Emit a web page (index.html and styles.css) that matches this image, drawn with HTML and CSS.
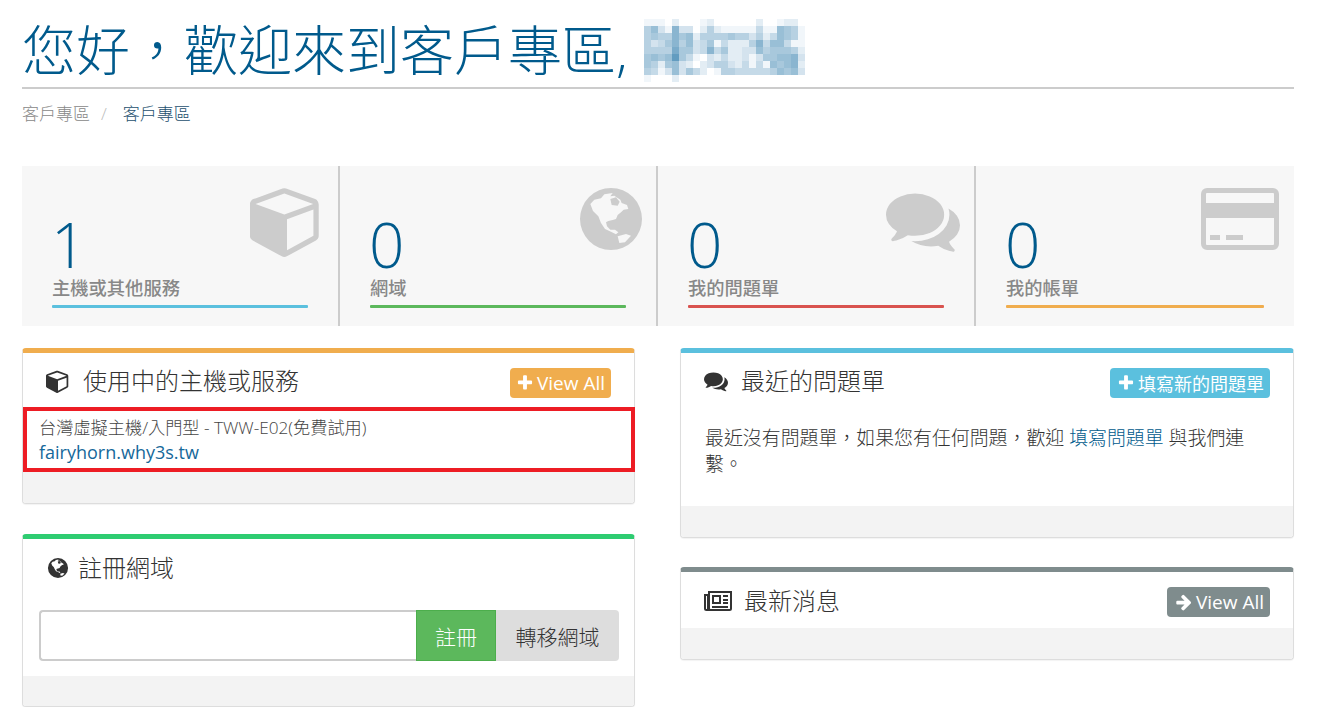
FILE: index.html
```html
<!DOCTYPE html>
<html lang="zh-Hant">
<head>
<meta charset="utf-8">
<title>客戶專區</title>
<link rel="stylesheet" href="styles.css">
</head>
<body>
<svg class="defs" width="0" height="0" aria-hidden="true">
  <symbol id="i-cube" viewBox="0 0 1792 1792"><path d="M896 1629l640-349v-636l-640 233v752zm-64-865l698-254-698-254-698 254zm832-252v768q0 35-18 65t-50 47l-704 384q-28 16-61 16t-61-16l-704-384q-32-18-50-47t-18-65v-768q0-40 23-73t61-49l704-256q22-8 44-8t44 8l704 256q38 16 61 49t23 73z"/></symbol>
  <symbol id="i-globe" viewBox="0 0 240 240"><path fill-rule="evenodd" d="M120 27a93 93 0 1 0 0 186a93 93 0 1 0 0-186zM58 75L70 62L90 58L100 46L125 42L118 52L130 50L148 62L152 72L168 78L172 90L158 92L150 100L140 108L135 120L128 122L112 126L105 130L108 142L118 152L132 152L142 160L135 166L120 158L102 150L90 132L82 112L66 96zM140 172L165 165L180 170L162 190L145 192zM118 60L135 55L146 68L140 80L122 78z"/></symbol>
  <symbol id="i-comments" viewBox="0 0 1792 1792"><path d="M1408 768q0 139-94 257t-256.500 186.500-353.500 68.500q-86 0-176-16-124 88-278 128-36 9-86 16h-3q-11 0-20.500-8t-11.500-21q-1-3-1-6.500t.5-6.500 2-6l2.500-5 3.500-5.500 4-5 4.500-5 4-4.500q5-6 23-25t26-29.500 22.500-29 25-38.500 20.500-44q-124-72-195-177t-71-224q0-139 94-257t256.500-186.500 353.500-68.500 353.500 68.500 256.500 186.500 94 257zm384 256q0 120-71 224.500t-195 176.500q10 24 20.500 44t25 38.500 22.500 29 26 29.500 23 25q1 1 4 4.500t4.500 5 4 5 3.500 5.500l2.500 5 2 6 .5 6.500-1 6.500q-3 14-13 22t-22 7q-50-7-86-16-154-40-278-128-90 16-176 16-271 0-472-132 58 4 88 4 161 0 309-45t264-129q125-92 192-212t67-254q0-77-23-152 129 71 204 178t75 230z"/></symbol>
  <symbol id="i-card" viewBox="0 0 78 62"><path fill-rule="evenodd" d="M6 0H72a6 6 0 0 1 6 6V56a6 6 0 0 1-6 6H6a6 6 0 0 1-6-6V6a6 6 0 0 1 6-6zM5 6V15H73V6a1 1 0 0 0-1-1H6a1 1 0 0 0-1 1zM5 30V56a1 1 0 0 0 1 1H72a1 1 0 0 0 1-1V30zM9 47H19V52H9zM25 47H42V52H25z"/></symbol>
  <symbol id="i-news" viewBox="0 0 28 20"><path fill-rule="evenodd" d="M4 0H28V17.500A2.500 2.500 0 0 1 25.500 20H2.500A2.500 2.500 0 0 1 0 17.500V3H4zM2 5V17.500A.5.5 0 0 0 3 17.500V5zM6 2V17a1 1 0 0 1 0 1H25.500A.5.5 0 0 0 26 17.500V2zM8 4H17V13H8zM10 6V11H15V6zM19 4H24V6H19zM19 8H24V10H19zM19 11H24V13H19zM8 15H24V17H8z"/></symbol>
  <symbol id="i-plus" viewBox="0 0 1792 1792"><path d="M1600 736v192q0 40-28 68t-68 28h-416v416q0 40-28 68t-68 28h-192q-40 0-68-28t-28-68v-416h-416q-40 0-68-28t-28-68v-192q0-40 28-68t68-28h416v-416q0-40 28-68t68-28h192q40 0 68 28t28 68v416h416q40 0 68 28t28 68z"/></symbol>
  <symbol id="i-arrow" viewBox="0 0 1792 1792"><path d="M1600 960q0 54-37 91l-651 651q-39 37-91 37-51 0-90-37l-75-75q-38-38-38-91t38-91l293-293h-704q-52 0-84.500-37.500t-32.500-90.500v-128q0-53 32.500-90.500t84.500-37.500h704l-293-294q-38-36-38-90t38-90l75-75q38-38 90-38 53 0 91 38l651 651q37 35 37 90z"/></symbol>
</svg>

<header class="page-head">
  <h1 class="title">
    <span>您好，歡迎來到客戶專區,</span>
    <svg class="mosaic" width="161" height="63" viewBox="0 0 161 63" role="img" aria-label="已模糊的姓名">
      <g><rect class="l1" x="0"/><rect class="l1" x="7"/><rect class="l1" x="14"/><rect class="l2" x="28"/><rect class="l1" x="56"/><rect class="l2" x="63"/><rect class="l2" x="112"/><rect class="l1" x="133"/><rect class="l2" x="140"/><rect class="l2" x="147"/></g>
      <g transform="translate(0,7)"><rect class="l5" x="0"/><rect class="l7" x="7"/><rect class="l3" x="14"/><rect class="l1" x="21"/><rect class="l8" x="28"/><rect class="l3" x="35"/><rect class="l3" x="42"/><rect class="l2" x="56"/><rect class="l5" x="63"/><rect class="l2" x="70"/><rect class="l1" x="77"/><rect class="l1" x="84"/><rect class="l1" x="91"/><rect class="l1" x="98"/><rect class="l1" x="105"/><rect class="l4" x="112"/><rect class="l1" x="119"/><rect class="l1" x="126"/><rect class="l7" x="133"/><rect class="l6" x="140"/><rect class="l5" x="147"/><rect class="l1" x="154"/></g>
      <g transform="translate(0,14)"><rect class="l5" x="0"/><rect class="l6" x="7"/><rect class="l5" x="14"/><rect class="l5" x="21"/><rect class="l8" x="28"/><rect class="l6" x="35"/><rect class="l7" x="42"/><rect class="l2" x="49"/><rect class="l5" x="56"/><rect class="l5" x="63"/><rect class="l5" x="70"/><rect class="l5" x="77"/><rect class="l6" x="84"/><rect class="l5" x="91"/><rect class="l5" x="98"/><rect class="l3" x="105"/><rect class="l5" x="112"/><rect class="l2" x="119"/><rect class="l4" x="126"/><rect class="l7" x="133"/><rect class="l6" x="140"/><rect class="l5" x="147"/><rect class="l1" x="154"/></g>
      <g transform="translate(0,21)"><rect class="l5" x="0"/><rect class="l3" x="7"/><rect class="l4" x="14"/><rect class="l6" x="21"/><rect class="l8" x="28"/><rect class="l5" x="35"/><rect class="l7" x="42"/><rect class="l3" x="49"/><rect class="l4" x="56"/><rect class="l6" x="63"/><rect class="l1" x="70"/><rect class="l4" x="77"/><rect class="l2" x="84"/><rect class="l2" x="91"/><rect class="l2" x="98"/><rect class="l5" x="105"/><rect class="l8" x="112"/><rect class="l4" x="119"/><rect class="l7" x="126"/><rect class="l7" x="133"/><rect class="l4" x="140"/><rect class="l1" x="147"/><rect class="l1" x="154"/></g>
      <g transform="translate(0,28)"><rect class="l5" x="0"/><rect class="l5" x="7"/><rect class="l5" x="14"/><rect class="l5" x="21"/><rect class="l9" x="28"/><rect class="l6" x="35"/><rect class="l6" x="42"/><rect class="l3" x="49"/><rect class="l4" x="56"/><rect class="l8" x="63"/><rect class="l4" x="70"/><rect class="l6" x="77"/><rect class="l2" x="84"/><rect class="l2" x="91"/><rect class="l3" x="98"/><rect class="l3" x="105"/><rect class="l7" x="112"/><rect class="l5" x="119"/><rect class="l6" x="126"/><rect class="l6" x="133"/><rect class="l6" x="140"/><rect class="l5" x="147"/><rect class="l2" x="154"/></g>
      <g transform="translate(0,35)"><rect class="l6" x="0"/><rect class="l7" x="7"/><rect class="l6" x="14"/><rect class="l7" x="21"/><rect class="l10" x="28"/><rect class="l6" x="35"/><rect class="l4" x="42"/><rect class="l1" x="49"/><rect class="l3" x="63"/><rect class="l2" x="70"/><rect class="l4" x="77"/><rect class="l2" x="84"/><rect class="l2" x="91"/><rect class="l3" x="98"/><rect class="l1" x="105"/><rect class="l3" x="112"/><rect class="l6" x="119"/><rect class="l6" x="126"/><rect class="l7" x="133"/><rect class="l7" x="140"/><rect class="l8" x="147"/><rect class="l3" x="154"/></g>
      <g transform="translate(0,42)"><rect class="l6" x="0"/><rect class="l5" x="7"/><rect class="l2" x="14"/><rect class="l6" x="21"/><rect class="l7" x="28"/><rect class="l3" x="35"/><rect class="l2" x="42"/><rect class="l2" x="56"/><rect class="l3" x="63"/><rect class="l5" x="70"/><rect class="l5" x="77"/><rect class="l3" x="84"/><rect class="l2" x="91"/><rect class="l4" x="98"/><rect class="l1" x="105"/><rect class="l4" x="112"/><rect class="l1" x="119"/><rect class="l7" x="126"/><rect class="l6" x="133"/><rect class="l7" x="140"/><rect class="l8" x="147"/><rect class="l2" x="154"/></g>
      <g transform="translate(0,49)"><rect class="l5" x="0"/><rect class="l4" x="7"/><rect class="l1" x="14"/><rect class="l3" x="21"/><rect class="l7" x="28"/><rect class="l3" x="35"/><rect class="l6" x="42"/><rect class="l4" x="49"/><rect class="l2" x="56"/><rect class="l1" x="70"/><rect class="l5" x="77"/><rect class="l5" x="84"/><rect class="l4" x="91"/><rect class="l4" x="98"/><rect class="l4" x="105"/><rect class="l4" x="112"/><rect class="l4" x="119"/><rect class="l5" x="126"/><rect class="l7" x="133"/><rect class="l6" x="140"/><rect class="l7" x="147"/><rect class="l3" x="154"/></g>
      <g transform="translate(0,56)"><rect class="l1" x="0"/><rect class="l2" x="28"/></g>
    </svg>
  </h1>
</header>
<nav class="crumbs"><a class="crumb-link">客戶專區</a><span class="crumb-sep">/</span><span class="crumb-here">客戶專區</span></nav>

<section class="tiles">
  <div class="tile tile-blue">
    <svg class="tile-icon"><use href="#i-cube"/></svg>
    <div class="tile-num">1</div>
    <div class="tile-label">主機或其他服務</div>
  </div>
  <div class="tile tile-green">
    <svg class="tile-icon icon-globe"><use href="#i-globe"/></svg>
    <div class="tile-num">0</div>
    <div class="tile-label">網域</div>
  </div>
  <div class="tile tile-red">
    <svg class="tile-icon"><use href="#i-comments"/></svg>
    <div class="tile-num">0</div>
    <div class="tile-label">我的問題單</div>
  </div>
  <div class="tile tile-gold">
    <svg class="tile-icon icon-card"><use href="#i-card"/></svg>
    <div class="tile-num">0</div>
    <div class="tile-label">我的帳單</div>
  </div>
</section>

<main class="panels">
  <div class="col">
    <article class="panel top-gold">
      <div class="panel-head head-short">
        <h3 class="panel-title"><svg class="ico ico-cube"><use href="#i-cube"/></svg>使用中的主機或服務</h3>
        <a class="btn btn-gold"><svg class="btn-ico"><use href="#i-plus"/></svg>View All</a>
      </div>
      <div class="service">
        <div class="service-name">台灣虛擬主機/入門型 - TWW-E02(免費試用)</div>
        <a class="service-domain">fairyhorn.why3s.tw</a>
      </div>
      <div class="panel-foot"></div>
    </article>
    <article class="panel top-green">
      <div class="panel-head">
        <h3 class="panel-title title-low"><svg class="ico ico-globe"><use href="#i-globe"/></svg>註冊網域</h3>
      </div>
      <div class="domain-body">
        <div class="domain-group">
          <input class="domain-input" type="text" aria-label="網域">
          <button class="dom-btn dom-reg">註冊</button>
          <button class="dom-btn dom-move">轉移網域</button>
        </div>
      </div>
      <div class="panel-foot foot-short"></div>
    </article>
  </div>
  <div class="col col-right">
    <article class="panel top-blue">
      <div class="panel-head">
        <h3 class="panel-title"><svg class="ico ico-chat"><use href="#i-comments"/></svg>最近的問題單</h3>
        <a class="btn btn-blue"><svg class="btn-ico"><use href="#i-plus"/></svg>填寫新的問題單</a>
      </div>
      <p class="panel-text">最近沒有問題單，如果您有任何問題，歡迎 <a class="text-link">填寫問題單</a> 與我們連繫。</p>
      <div class="panel-foot"></div>
    </article>
    <article class="panel top-gray">
      <div class="panel-head">
        <h3 class="panel-title title-low"><svg class="ico ico-news"><use href="#i-news"/></svg>最新消息</h3>
        <a class="btn btn-gray"><svg class="btn-ico"><use href="#i-arrow"/></svg>View All</a>
      </div>
      <div class="panel-foot"></div>
    </article>
  </div>
</main>
</body>
</html>
```

FILE: styles.css
```css
* { box-sizing: border-box; }
html, body { margin: 0; }
body {
  padding: 0 27px 0 22px;
  background: #fff;
  color: #333;
  font-family: "Open Sans", "Noto Sans CJK TC", sans-serif;
  font-size: 19px;
}
.defs { position: absolute; }

.page-head { height: 89px; border-bottom: 2px solid #ccc; }
.title {
  margin: 0;
  height: 87px;
  display: flex;
  align-items: flex-start;
  color: #005a8c;
  font-size: 54px;
  font-weight: 300;
  line-height: 100px;
  white-space: nowrap;
}
.title span { display: block; }
.mosaic { flex: none; margin: 19px 0 0 16px; }
.mosaic rect { width: 7px; height: 7px; }
.l1 { fill: #f1f6fa; } .l2 { fill: #e3edf4; } .l3 { fill: #d4e3ee; }
.l4 { fill: #c5dae8; } .l5 { fill: #b7d1e2; } .l6 { fill: #a8c8dc; }
.l7 { fill: #99bfd6; } .l8 { fill: #8ab5d0; } .l9 { fill: #7aabca; }
.l10 { fill: #629cc0; }

.crumbs {
  display: flex;
  height: 77px;
  padding-top: 14px;
  font-size: 17px;
  line-height: 22px;
  font-weight: 300;
}
.crumb-link { color: #888; }
.crumb-sep { color: #bbb; margin: 0 16px 0 11px; }
.crumb-here { color: #1d4f6e; }

.tiles {
  display: grid;
  grid-template-columns: repeat(4, 318px);
  height: 160px;
  background: #f7f7f7;
}
.tile {
  position: relative;
  padding: 42px 30px 0 30px;
  border-right: 2px solid #ccc;
}
.tile:last-child { border-right: 0; }
.tile-icon {
  position: absolute;
  top: 17px;
  right: 14px;
  width: 74px;
  height: 74px;
  fill: #ccc;
}
.icon-globe { top: 13px; right: 5px; width: 80px; height: 80px; }
.icon-card { top: 22px; right: 15px; width: 78px; height: 62px; }
.tile-num {
  margin-left: -1px;
  color: #005a8c;
  font-size: 62px;
  font-weight: 300;
  line-height: 72px;
}
.tile-label {
  height: 23px;
  margin-top: -4px;
  color: #888;
  font-size: 18.3px;
  font-weight: 500;
  line-height: 24px;
}
.tile-label::after {
  content: "";
  display: block;
  height: 3px;
  margin-top: 5px;
  border-radius: 1px;
  background: var(--bar);
}
.tile-blue { --bar: #5bc0de; }
.tile-green { --bar: #5cb85c; }
.tile-red { --bar: #d9534f; }
.tile-gold { --bar: #f0ad4e; }

.panels {
  display: grid;
  grid-template-columns: 613px 614px;
  column-gap: 45px;
  margin-top: 22px;
}
.col { display: flex; flex-direction: column; gap: 30px; }
.col-right { gap: 29px; }
.panel {
  border: 1px solid #ddd;
  border-top: 5px solid;
  border-radius: 4px;
  background: #fff;
  box-shadow: 0 1px 1px rgba(0, 0, 0, .05);
}
.top-gold { border-top-color: #f0ad4e; }
.top-green { border-top-color: #2ecc71; }
.top-blue { border-top-color: #5bc0de; }
.top-gray { border-top-color: #7f8c8d; }

.panel-head {
  display: flex;
  justify-content: space-between;
  align-items: flex-start;
  height: 56px;
  padding: 15px 23px 0 23px;
}
.head-short { height: 54px; }
.panel-title {
  margin: 0;
  display: flex;
  align-items: center;
  height: 26px;
  font-size: 24px;
  font-weight: 300;
  line-height: 26px;
}
.title-low { height: 28px; }
.ico { flex: none; fill: #333; }
.ico-cube { width: 24px; height: 24px; margin-right: 13px; }
.ico-globe { width: 26px; height: 26px; margin-right: 7px; margin-left: -1px; }
.ico-chat { width: 24px; height: 24px; margin-right: 13px; }
.ico-news { width: 28px; height: 20px; margin-right: 12px; }

.btn {
  display: flex;
  align-items: center;
  height: 30px;
  padding: 0 6px 0 7px;
  border-radius: 4px;
  color: #fff;
  font-size: 19px;
  font-weight: 400;
}
.btn-ico { width: 18px; height: 18px; margin-right: 3px; fill: #fff; }
.btn-gold { background: #f0ad4e; padding-left: 6px; }
.btn-blue { background: #5bc0de; font-size: 18px; }
.btn-gray { background: #7f8c8d; padding-left: 8px; }

.service {
  height: 65px;
  margin: 0 -1px 0 0;
  padding: 5px 12px 0 12px;
  border: 4px solid #ed1c24;
}
.service-name { color: #444; font-size: 17.2px; font-weight: 300; line-height: 24px; }
.service-domain { color: #15689a; font-size: 18px; line-height: 24px; display: block; }

.panel-foot { height: 31px; background: #f3f3f3; border-radius: 0 0 3px 3px; }
.foot-short { height: 30px; }

.panel-text {
  margin: 0;
  height: 97px;
  padding: 16px 24px 0 24px;
  font-size: 18.92px;
  font-weight: 300;
  line-height: 26px;
}
.text-link { color: #005a8c; }

.domain-body { padding: 15px 15px 15px 16px; }
.domain-group { display: flex; height: 51px; }
.domain-input {
  flex: 1;
  min-width: 0;
  border: 2px solid #ccc;
  border-right: 0;
  border-radius: 4px 0 0 4px;
  background: #fff;
}
.dom-btn {
  height: 51px;
  padding: 0;
  font-family: inherit;
  font-size: 21px;
  font-weight: 300;
}
.dom-reg { width: 80px; border: 1px solid #4cae4c; background: #5cb85c; color: #fff; }
.dom-move { width: 123px; border: 0; border-radius: 0 4px 4px 0; background: #ddd; color: #333; }
```
